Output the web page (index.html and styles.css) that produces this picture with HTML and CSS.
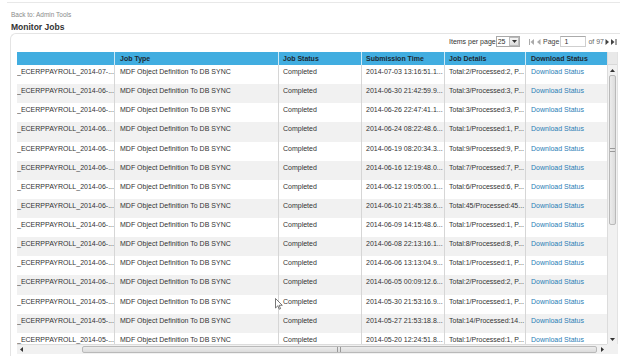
FILE: index.html
```html
<!DOCTYPE html>
<html>
<head>
<meta charset="utf-8">
<link rel="stylesheet" href="styles.css">
</head>
<body>
<div class="topline"></div>
<div class="crumb">Back to: Admin Tools</div>
<h1 class="title">Monitor Jobs</h1>
<div class="panel">
  <div class="toolbar">
    <span class="ipp">Items per page</span>
    <span class="select"><span class="selval">25</span><span class="selbtn"><svg width="5" height="3" viewBox="0 0 5 3"><path d="M0 0H5L2.5 3Z" fill="#333"/></svg></span></span>
    <span class="pager">
      <svg class="pico" width="6" height="6" viewBox="0 0 6 6"><rect x="0" y="0" width="1" height="6" fill="#aaa"/><path d="M5 0V6L1.5 3Z" fill="#aaa"/></svg>
      <svg class="pico" width="4" height="6" viewBox="0 0 4 6"><path d="M3.5 0V6L0 3Z" fill="#aaa"/></svg>
      <span class="plabel">Page</span>
      <span class="pinput">1</span>
      <span class="pof">of 97</span>
      <svg class="pico" width="4" height="6" viewBox="0 0 4 6"><path d="M0.5 0V6L4 3Z" fill="#444"/></svg>
      <svg class="pico" width="6" height="6" viewBox="0 0 6 6"><path d="M0 0V6L3.5 3Z" fill="#444"/><rect x="4.5" y="0" width="1" height="6" fill="#444"/></svg>
    </span>
  </div>
  <div class="grid">
    <div class="view">
      <div class="row head">
        <div class="c c1"></div>
        <div class="c c2">Job Type</div>
        <div class="c c3">Job Status</div>
        <div class="c c4">Submission Time</div>
        <div class="c c5">Job Details</div>
        <div class="c c6">Download Status</div>
      </div>
      <div class="body">
        <div class="row"><div class="c c1">_ECERPPAYROLL_2014-07-...</div><div class="c c2">MDF Object Definition To DB SYNC</div><div class="c c3">Completed</div><div class="c c4">2014-07-03 13:16:51.1...</div><div class="c c5">Total:2/Processed:2, P...</div><div class="c c6"><a>Download Status</a></div></div>
        <div class="row"><div class="c c1">_ECERPPAYROLL_2014-06-...</div><div class="c c2">MDF Object Definition To DB SYNC</div><div class="c c3">Completed</div><div class="c c4">2014-06-30 21:42:59.9...</div><div class="c c5">Total:3/Processed:3, P...</div><div class="c c6"><a>Download Status</a></div></div>
        <div class="row"><div class="c c1">_ECERPPAYROLL_2014-06-...</div><div class="c c2">MDF Object Definition To DB SYNC</div><div class="c c3">Completed</div><div class="c c4">2014-06-26 22:47:41.1...</div><div class="c c5">Total:3/Processed:3, P...</div><div class="c c6"><a>Download Status</a></div></div>
        <div class="row"><div class="c c1">_ECERPPAYROLL_2014-06...</div><div class="c c2">MDF Object Definition To DB SYNC</div><div class="c c3">Completed</div><div class="c c4">2014-06-24 08:22:48.6...</div><div class="c c5">Total:1/Processed:1, P...</div><div class="c c6"><a>Download Status</a></div></div>
        <div class="row"><div class="c c1">_ECERPPAYROLL_2014-06-...</div><div class="c c2">MDF Object Definition To DB SYNC</div><div class="c c3">Completed</div><div class="c c4">2014-06-19 08:20:34.3...</div><div class="c c5">Total:9/Processed:9, P...</div><div class="c c6"><a>Download Status</a></div></div>
        <div class="row"><div class="c c1">_ECERPPAYROLL_2014-06-...</div><div class="c c2">MDF Object Definition To DB SYNC</div><div class="c c3">Completed</div><div class="c c4">2014-06-16 12:19:48.0...</div><div class="c c5">Total:7/Processed:7, P...</div><div class="c c6"><a>Download Status</a></div></div>
        <div class="row"><div class="c c1">_ECERPPAYROLL_2014-06-...</div><div class="c c2">MDF Object Definition To DB SYNC</div><div class="c c3">Completed</div><div class="c c4">2014-06-12 19:05:00.1...</div><div class="c c5">Total:6/Processed:6, P...</div><div class="c c6"><a>Download Status</a></div></div>
        <div class="row"><div class="c c1">_ECERPPAYROLL_2014-06-...</div><div class="c c2">MDF Object Definition To DB SYNC</div><div class="c c3">Completed</div><div class="c c4">2014-06-10 21:45:38.6...</div><div class="c c5">Total:45/Processed:45...</div><div class="c c6"><a>Download Status</a></div></div>
        <div class="row"><div class="c c1">_ECERPPAYROLL_2014-06-...</div><div class="c c2">MDF Object Definition To DB SYNC</div><div class="c c3">Completed</div><div class="c c4">2014-06-09 14:15:48.6...</div><div class="c c5">Total:1/Processed:1, P...</div><div class="c c6"><a>Download Status</a></div></div>
        <div class="row"><div class="c c1">_ECERPPAYROLL_2014-06-...</div><div class="c c2">MDF Object Definition To DB SYNC</div><div class="c c3">Completed</div><div class="c c4">2014-06-08 22:13:16.1...</div><div class="c c5">Total:8/Processed:8, P...</div><div class="c c6"><a>Download Status</a></div></div>
        <div class="row"><div class="c c1">_ECERPPAYROLL_2014-06-...</div><div class="c c2">MDF Object Definition To DB SYNC</div><div class="c c3">Completed</div><div class="c c4">2014-06-06 13:13:04.9...</div><div class="c c5">Total:1/Processed:1, P...</div><div class="c c6"><a>Download Status</a></div></div>
        <div class="row"><div class="c c1">_ECERPPAYROLL_2014-06-...</div><div class="c c2">MDF Object Definition To DB SYNC</div><div class="c c3">Completed</div><div class="c c4">2014-06-05 00:09:12.6...</div><div class="c c5">Total:2/Processed:2, P...</div><div class="c c6"><a>Download Status</a></div></div>
        <div class="row"><div class="c c1">_ECERPPAYROLL_2014-05-...</div><div class="c c2">MDF Object Definition To DB SYNC</div><div class="c c3">Completed</div><div class="c c4">2014-05-30 21:53:16.9...</div><div class="c c5">Total:1/Processed:1, P...</div><div class="c c6"><a>Download Status</a></div></div>
        <div class="row"><div class="c c1">_ECERPPAYROLL_2014-05-...</div><div class="c c2">MDF Object Definition To DB SYNC</div><div class="c c3">Completed</div><div class="c c4">2014-05-27 21:53:18.8...</div><div class="c c5">Total:14/Processed:14...</div><div class="c c6"><a>Download Status</a></div></div>
        <div class="row"><div class="c c1">_ECERPPAYROLL_2014-05-...</div><div class="c c2">MDF Object Definition To DB SYNC</div><div class="c c3">Completed</div><div class="c c4">2014-05-20 12:24:51.8...</div><div class="c c5">Total:1/Processed:1, P...</div><div class="c c6"><a>Download Status</a></div></div>
      </div>
    </div>
    <div class="vscroll">
      <div class="vcap"></div>
      <div class="varrow"><svg width="5" height="3" viewBox="0 0 5 3"><path d="M0 3H5L2.5 0Z" fill="#333"/></svg></div>
      <div class="vthumb"><span class="vgrip"></span></div>
      <div class="vfill"></div>
      <div class="varrow"><svg width="5" height="3" viewBox="0 0 5 3"><path d="M0 0H5L2.5 3Z" fill="#333"/></svg></div>
    </div>
    <div class="hscroll">
      <div class="harrow"><svg width="3" height="5" viewBox="0 0 3 5"><path d="M3 0V5L0 2.5Z" fill="#333"/></svg></div>
      <div class="hgap"></div>
      <div class="hthumb"><span class="hgrip"></span></div>
      <div class="harrow"><svg width="3" height="5" viewBox="0 0 3 5"><path d="M0 0V5L3 2.5Z" fill="#333"/></svg></div>
    </div>
    <div class="corner"></div>
  </div>
</div>
<svg class="cursor" width="8" height="12" viewBox="0 0 8 12"><path d="M0.5 0.5V10L2.8 7.8L4.3 11.2L5.6 10.6L4.1 7.3H7.3Z" fill="#fff" stroke="#555" stroke-width="0.8" stroke-linejoin="round"/></svg>
</body>
</html>
```

FILE: styles.css
```css
* { box-sizing: border-box; }
html, body { margin: 0; padding: 0; }
body {
  width: 620px;
  height: 356px;
  overflow: hidden;
  background: #fff;
  font-family: "Liberation Sans", Arial, sans-serif;
  color: #333;
  position: relative;
}
.topline {
  margin: 2px 0 0 7px;
  border-top: 1px solid #e8e8e8;
}
.crumb {
  margin: 8px 0 0 11px;
  font-size: 6.5px;
  line-height: 8px;
  color: #8a8a8a;
}
.title {
  margin: 2.5px 0 0 11px;
  font-size: 8.5px;
  line-height: 11px;
  font-weight: bold;
  color: #333;
}
.panel {
  margin: 0.5px 0 0 10px;
  width: 610px;
  height: 330px;
  border: 1px solid #e4e4e4;
  border-right: none;
  border-bottom: none;
  border-top-left-radius: 6px;
  padding: 0 1px 0 6px;
}
.toolbar {
  display: flex;
  align-items: center;
  height: 18px;
  padding: 2px 0 5px 432px;
  font-size: 7px;
  color: #333;
  white-space: nowrap;
}
.ipp { width: 47px; }
.select {
  display: flex;
  height: 11px;
  width: 25px;
  border: 1px solid #a9a9a9;
  background: #fff;
}
.selval { flex: 1; padding-left: 1px; line-height: 9px; font-size: 7px; }
.selbtn {
  width: 10px;
  border: 1px solid #bbb;
  background: linear-gradient(#f6f6f6, #dcdcdc);
  display: flex;
  align-items: center;
  justify-content: center;
}
.pager {
  display: flex;
  align-items: center;
  margin-left: 9px;
}
.pico { display: block; margin-right: 2px; }
.plabel { margin-right: 1px; color: #444; }
.pinput {
  width: 26px;
  height: 11px;
  border: 1px solid #cfcfcf;
  border-top-color: #aaa;
  line-height: 9px;
  padding-left: 3px;
  margin-right: 2px;
}
.pof { margin-right: 1px; color: #666; }
.grid {
  display: grid;
  grid-template-columns: 590px 11px;
  grid-template-rows: 292px 10px;
  width: 601px;
}
.view { overflow: hidden; }
.row {
  display: flex;
  height: 19.14px;
  font-size: 7px;
  line-height: 8px;
}
.row.head {
  height: 13px;
  background: #41ade0;
  font-weight: bold;
  color: #1e2a33;
}
.body .row:nth-child(even) { background: #f1f1f1; }
.c {
  flex: none;
  overflow: hidden;
  white-space: nowrap;
  padding: 3px 0 0 4px;
  border-left: 1px solid #d6d6d6;
}
.head .c { padding-top: 2.5px; border-left-color: #cde9f6; }
.c1 { width: 97px; padding-left: 0; border-left: none; }
.c2 { width: 164px; padding-left: 5px; }
.c3 { width: 83px; }
.c4 { width: 83px; }
.c5 { width: 81px; }
.c6 { width: 82px; padding-left: 5px; }
.c6 a { color: #2a7db5; }
.vscroll {
  display: flex;
  flex-direction: column;
  background: #f1f1f1;
  border-left: 1px solid #dcdcdc;
  border-right: 1px solid #e2e2e2;
}
.vcap {
  height: 13px;
  background: #e9e9e9;
  border-bottom: 1px solid #d8d8d8;
}
.varrow {
  height: 10px;
  display: flex;
  align-items: center;
  justify-content: center;
}
.vthumb {
  height: 150px;
  margin: 0 1px;
  border: 1px solid #b9b9b9;
  border-radius: 2px;
  background: linear-gradient(90deg, #ececec, #dcdcdc);
  display: flex;
  align-items: center;
  justify-content: center;
}
.vgrip { width: 5px; height: 4px; border-top: 1px solid #999; border-bottom: 1px solid #999; }
.vfill { flex: 1; }
.hscroll {
  display: flex;
  align-items: stretch;
  background: #f1f1f1;
  border-top: 1px solid #dcdcdc;
}
.harrow {
  width: 10px;
  display: flex;
  align-items: center;
  justify-content: center;
}
.hgap { width: 55px; }
.hthumb {
  width: 518px;
  margin: 1px 0;
  border: 1px solid #b9b9b9;
  border-radius: 2px;
  background: linear-gradient(#ececec, #dcdcdc);
  display: flex;
  align-items: center;
  justify-content: center;
}
.hgrip { width: 4px; height: 5px; border-left: 1px solid #999; border-right: 1px solid #999; }
.corner { background: #f1f1f1; }
.cursor { position: absolute; left: 275px; top: 298px; }
```
